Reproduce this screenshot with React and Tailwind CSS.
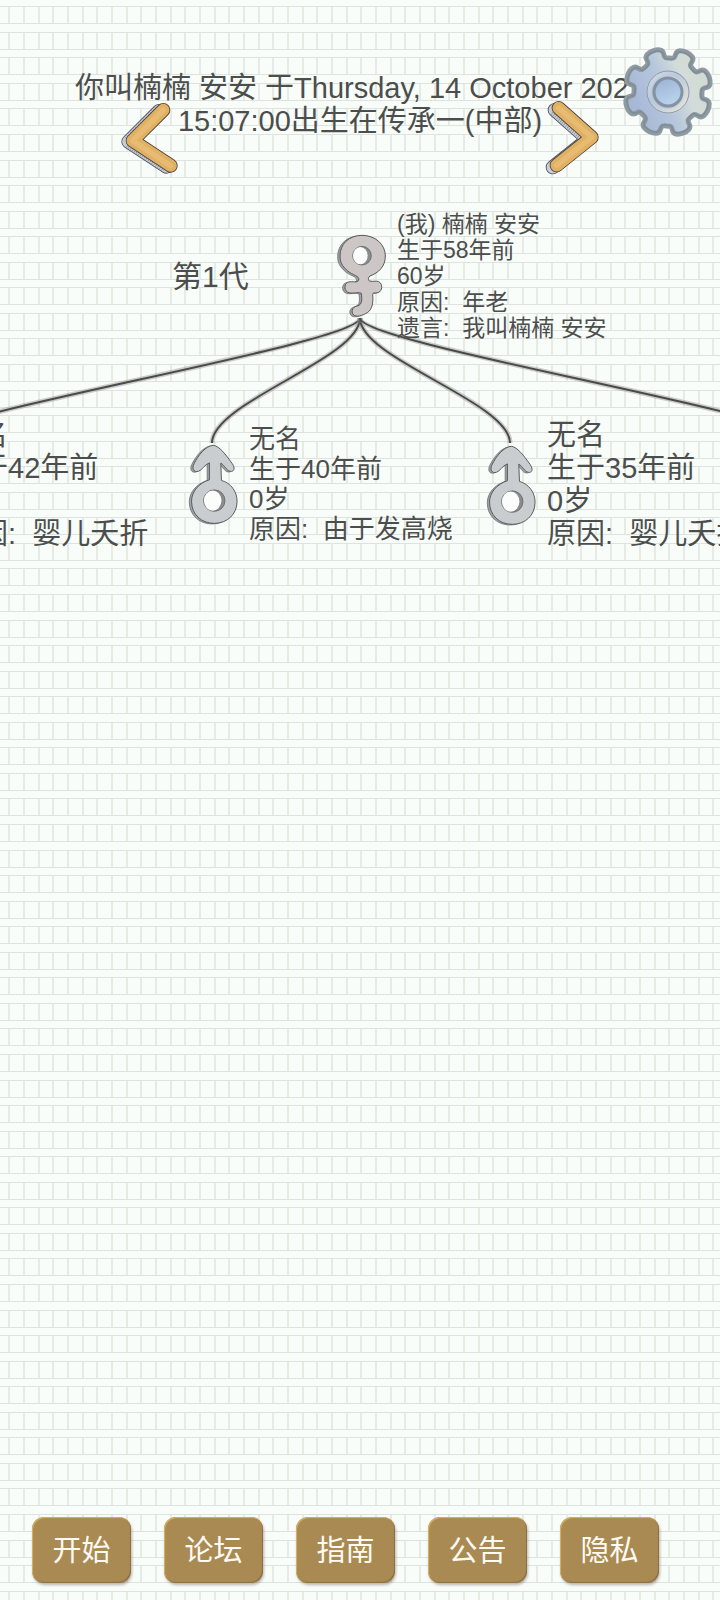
import { useId } from 'react';

const FONT = "font-['Liberation_Sans','Noto_Sans_CJK_SC',sans-serif]";

const menu = ['开始', '论坛', '指南', '公告', '隐私'];

// x / y are measured from the top centre of the tree canvas
const people = [
  {
    id: 'me',
    sex: 'female',
    place: 'left-[-24px] top-[11px]',
    text: 'text-[23px] leading-[26px]',
    lines: ['(我) 楠楠 安安', '生于58年前', '60岁', '原因:  年老', '遗言:  我叫楠楠 安安'],
  },
  {
    id: 'child-42',
    sex: 'male',
    place: 'left-[-471px] top-[219px]',
    text: 'text-[29px] leading-[33px]',
    lines: ['无名', '生于42年前', '0岁', '原因:  婴儿夭折'],
  },
  {
    id: 'child-40',
    sex: 'male',
    place: 'left-[-172px] top-[224px]',
    text: 'text-[26px] leading-[30px]',
    lines: ['无名', '生于40年前', '0岁', '原因:  由于发高烧'],
  },
  {
    id: 'child-35',
    sex: 'male',
    place: 'left-[126px] top-[219px]',
    text: 'text-[29px] leading-[33px]',
    lines: ['无名', '生于35年前', '0岁', '原因:  婴儿夭折'],
  },
];

const links = [
  'M0 118C0 144 -445 216 -445 242',
  'M0 118C0 159 -148 202 -148 243',
  'M0 118C0 159 150 202 150 243',
  'M0 118C0 144 447 216 447 242',
];

// Manuscript paper: 9 rows of 3 cells per tile
const Paper = () => {
  const id = useId();
  const rows = [6, 32, 57, 83, 108, 134, 160, 185, 211];
  return (
    <svg className="absolute inset-0 w-full h-full" aria-hidden="true">
      <defs>
        <pattern id={id} width="44" height="230" patternUnits="userSpaceOnUse">
          <rect width="44" height="230" fill="#f9fdfa" />
          {rows.map((y) => (
            <g key={y}>
              {[8, 23, 38].map((x) => (
                <rect key={x} x={x} y={y} width="2" height="17" fill="#e6ebe4" />
              ))}
              <rect x="0" y={y} width="44" height="1" fill="#dee3dd" />
              <rect x="0" y={y + 17} width="44" height="1" fill="#dee3dd" />
            </g>
          ))}
        </pattern>
      </defs>
      <rect width="100%" height="100%" fill={`url(#${id})`} />
    </svg>
  );
};

const gearPath = () => {
  const profile = [[-18, 34], [-14, 35], [-13, 42], [-5, 44], [5, 44], [13, 42], [14, 35], [18, 34]];
  const pts = [];
  for (let i = 0; i < 8; i++) {
    profile.forEach(([da, r]) => {
      const a = ((i * 45 - 20 + da) * Math.PI) / 180;
      pts.push([Math.cos(a) * r, Math.sin(a) * r]);
    });
  }
  const mid = (p, q) => `${((p[0] + q[0]) / 2).toFixed(1)} ${((p[1] + q[1]) / 2).toFixed(1)}`;
  let d = `M${mid(pts[pts.length - 1], pts[0])}`;
  pts.forEach((p, i) => {
    d += `Q${p[0].toFixed(1)} ${p[1].toFixed(1)} ${mid(p, pts[(i + 1) % pts.length])}`;
  });
  return d + 'Z';
};

const Gear = () => (
  <svg viewBox="-46 -46 92 92" className="w-[92px] h-[92px] overflow-visible" aria-hidden="true">
    <defs>
      <linearGradient id="gearBody" x1="0" y1="0.7" x2="1" y2="0.3">
        <stop offset="0" stopColor="#a3b4d6" />
        <stop offset="0.45" stopColor="#b5c6dd" />
        <stop offset="0.7" stopColor="#d3dcd9" />
        <stop offset="1" stopColor="#d3dad0" />
      </linearGradient>
      <linearGradient id="gearRing" x1="0" y1="0" x2="1" y2="1">
        <stop offset="0" stopColor="#d3dbe2" />
        <stop offset="0.4" stopColor="#b9c8dc" />
        <stop offset="1" stopColor="#e8e5da" />
      </linearGradient>
      <linearGradient id="gearHub" x1="0" y1="0" x2="0.4" y2="1">
        <stop offset="0" stopColor="#9bb0d3" />
        <stop offset="1" stopColor="#b9d2ec" />
      </linearGradient>
    </defs>
    <path d={gearPath()} fill="url(#gearBody)" stroke="#8f9ba3" strokeWidth="5" strokeLinejoin="round" />
    <path d={gearPath()} fill="none" stroke="#75828c" strokeWidth="2" opacity="0.5" transform="scale(0.97)" />
    <circle r="19" fill="none" stroke="url(#gearRing)" strokeWidth="5" />
    <circle r="21" fill="none" stroke="#8c99aa" strokeWidth="1" />
    <circle r="14" fill="url(#gearHub)" stroke="#8492a3" strokeWidth="3" />
  </svg>
);

const Arrow = ({ viewBox, points, shadow }) => (
  <svg viewBox={viewBox} className="w-[60px] h-[72px] overflow-visible" fill="none" strokeLinecap="round" strokeLinejoin="round" aria-hidden="true">
    <g transform={shadow}>
      <polyline points={points} stroke="#4f515c" strokeWidth="42" />
      <polyline points={points} stroke="#c9ccd6" strokeWidth="37" />
      <polyline points={points} stroke="#85878f" strokeWidth="34" strokeDasharray="2 5" strokeLinecap="butt" />
    </g>
    <polyline points={points} stroke="#4a423a" strokeWidth="42" />
    <polyline points={points} stroke="#e0b163" strokeWidth="37" />
    <polyline points={points} stroke="#edc782" strokeWidth="16" opacity="0.5" />
  </svg>
);

const MALE =
  'M640 190C658 192 678 218 698 246C709 262 703 272 692 270C680 268 676 252 663 245L665 298C694 306 713 332 713 362C713 402 683 430 643 430C603 430 573 402 573 362C573 332 596 306 628 296L628 244C612 250 606 266 594 270C580 274 573 262 581 246C594 220 616 192 640 190Z';
const FEMALE =
  'M126 106C166 106 196 133 196 168C196 200 176 218 150 228C144 232 144 238 148 243C162 246 168 241 176 245C190 252 187 274 174 278C166 280 158 276 158 284C160 304 158 328 142 338C128 346 108 354 99 343C92 330 100 320 112 318C128 314 126 296 124 280C112 274 96 284 82 276C70 268 74 248 86 246C98 243 112 250 116 240C120 228 98 226 82 212C66 198 60 186 60 168C60 133 86 106 126 106Z';

const SexIcon = ({ sex }) => {
  const male = sex === 'male';
  const body = male ? MALE : FEMALE;
  const [cx, cy, r] = male ? [643, 360, 33] : [126, 167, 28];
  return (
    <svg
      viewBox={male ? '564 186 150 246' : '48 102 150 252'}
      className={`w-[50px] shrink-0 overflow-visible ${male ? 'h-[80px]' : 'h-[84px]'}`}
      role="img"
      aria-label={male ? '男' : '女'}
    >
      <path d={body} transform="translate(-7 2)" fill="#a2a3a6" stroke="#5c5c5f" strokeWidth="2" />
      <path d={body} fill={male ? '#cacdd0' : '#cdc6c6'} stroke="#58585b" strokeWidth="3" />
      <circle cx={cx} cy={cy} r={r} fill="#8a8b8e" stroke="#58585b" strokeWidth="2" />
      <ellipse cx={cx - 5} cy={cy} rx={r - 6} ry={r - 2} fill="#fafdfb" />
    </svg>
  );
};

const Links = () => (
  <svg className="absolute left-0 top-0 w-px h-px overflow-visible" fill="none" aria-hidden="true">
    {links.map((d) => (
      <g key={d}>
        <path d={d} stroke="#888888" strokeWidth="5" opacity="0.4" />
        <path d={d} stroke="#4a4a4a" strokeWidth="2" />
      </g>
    ))}
  </svg>
);

const App = () => {
  return (
    <div className={`relative min-h-screen w-full bg-[#f9fdfa] text-[#4c4e4d] flex flex-col overflow-hidden ${FONT}`}>
      <Paper />

      {/* Header */}
      <header className="relative pt-[72px] pb-[23px] text-[29px] leading-[33px] whitespace-nowrap">
        <h1 className="flex justify-center">你叫楠楠 安安 于Thursday, 14 October 2021</h1>
        <div className="flex justify-center items-start">
          <button type="button" aria-label="上一个" className="cursor-pointer">
            <Arrow viewBox="54 75 180 216" points="190,90 98,182 212,257" shadow="translate(-13 3)" />
          </button>
          <p>15:07:00出生在传承一(中部)</p>
          <button type="button" aria-label="下一个" className="cursor-pointer">
            <Arrow viewBox="126 75 180 216" points="176,84 275,172 170,256" shadow="translate(-12 6)" />
          </button>
        </div>
        <button type="button" aria-label="设置" className="absolute right-[6px] top-[46px] cursor-pointer">
          <Gear />
        </button>
      </header>

      {/* Family tree */}
      <main className="relative flex-1 min-h-[400px]">
        <div className="absolute left-1/2 top-0">
          <Links />
          <h2 className="absolute left-[-188px] top-[60px] text-[30px] leading-[34px] whitespace-nowrap">第1代</h2>
          {people.map((p) => (
            <div key={p.id} className={`absolute flex items-center gap-[11px] ${p.place}`}>
              <SexIcon sex={p.sex} />
              <div className={`whitespace-pre ${p.text}`}>
                {p.lines.map((line) => (
                  <p key={line}>{line}</p>
                ))}
              </div>
            </div>
          ))}
        </div>
      </main>

      {/* Bottom menu */}
      <nav className="relative grid grid-cols-5 gap-[33px] pl-8 pr-[61px] pb-[17px]">
        {menu.map((label) => (
          <button
            key={label}
            type="button"
            className="h-[66px] pt-1 rounded-xl bg-[#a98a53] text-[29px] text-[#fffaf4] cursor-pointer shadow-[inset_1px_1px_1px_#d9b25c,inset_-1px_-1px_1px_#8c7042,1px_2px_3px_rgba(90,70,60,0.4)]"
          >
            {label}
          </button>
        ))}
      </nav>
    </div>
  );
};

export default App;
